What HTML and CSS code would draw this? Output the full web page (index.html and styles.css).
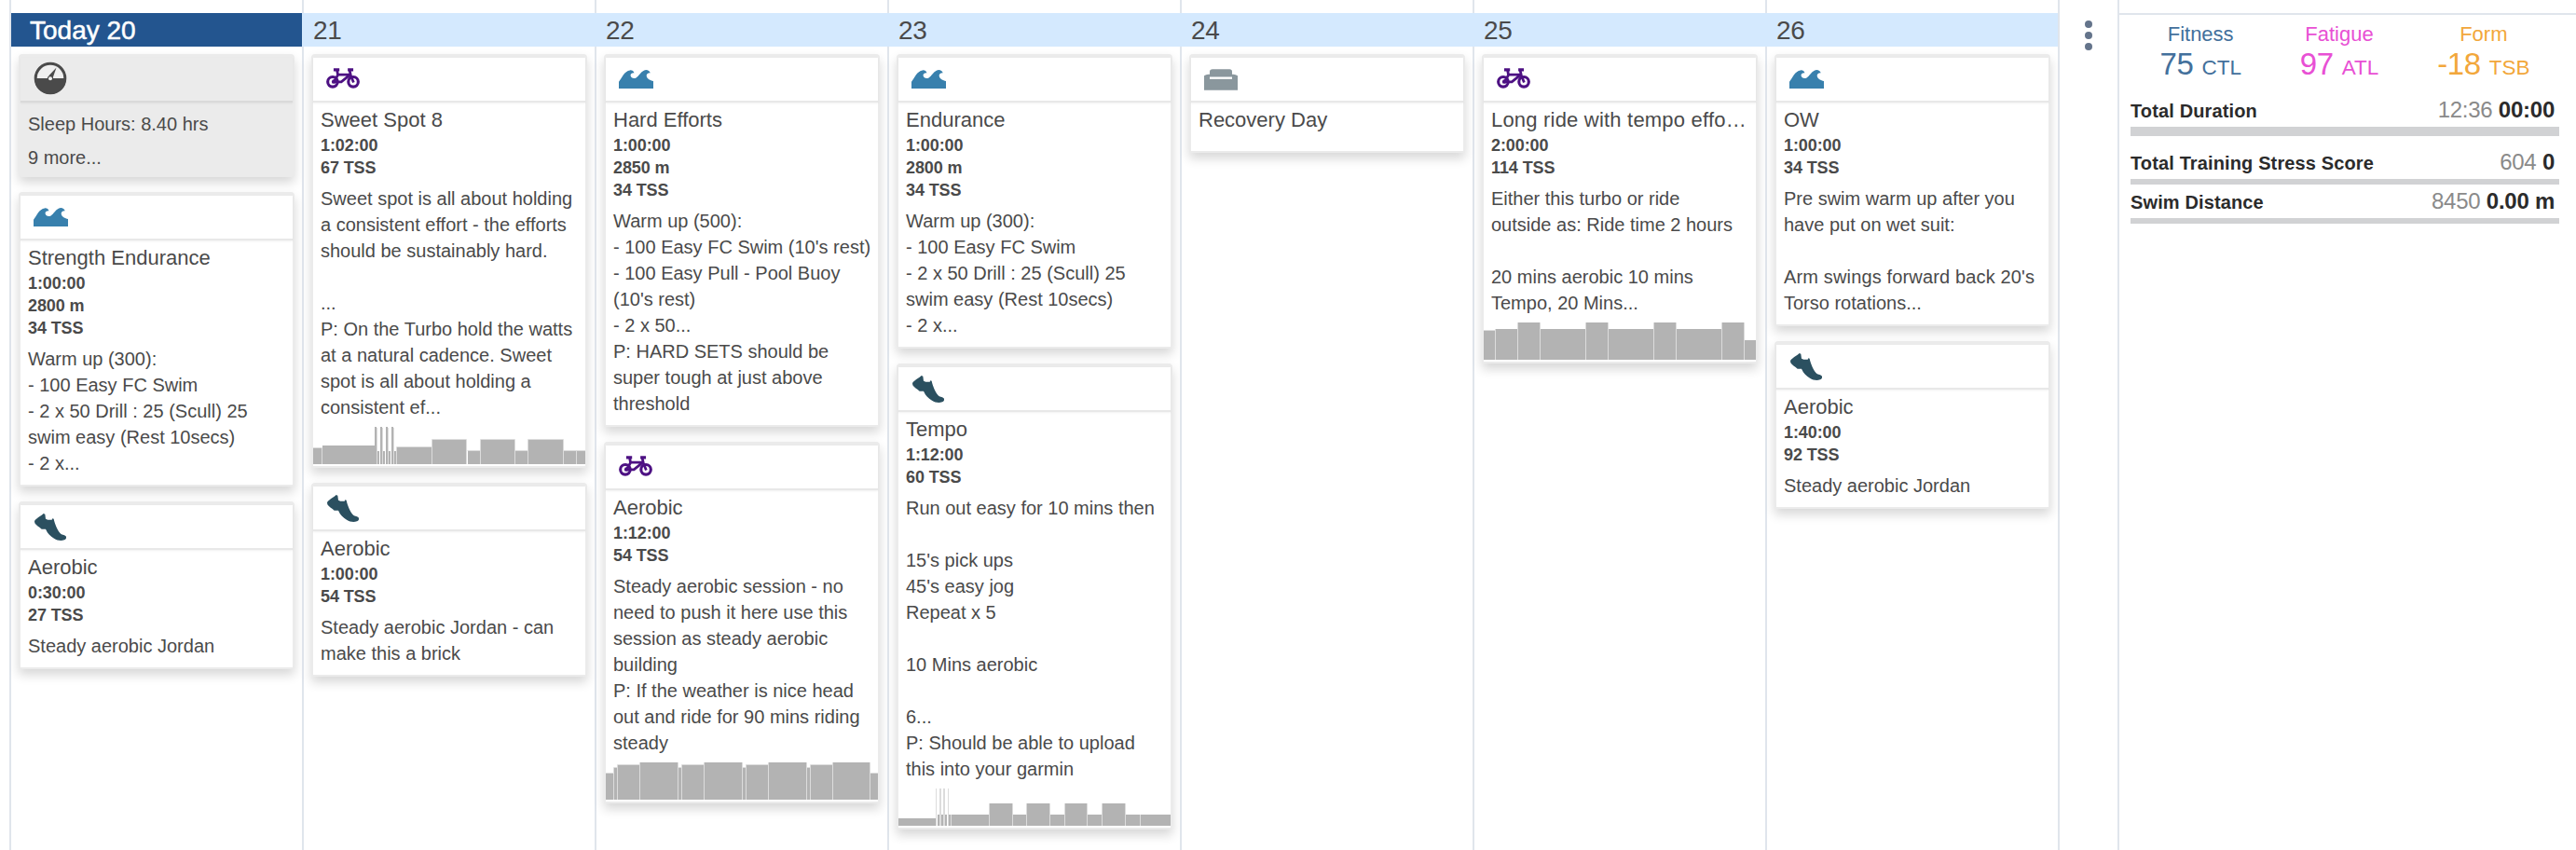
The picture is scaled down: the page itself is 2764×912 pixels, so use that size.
FILE: index.html
```html
<!DOCTYPE html>
<html lang="en">
<head>
<meta charset="utf-8">
<title>Training Calendar</title>
<link rel="stylesheet" href="styles.css">
</head>
<body>
<svg class="sprite" width="0" height="0">
  <symbol id="bike" viewBox="0 0 109 65">
    <g fill="none" stroke="#4d1183" stroke-width="9.5">
      <circle cx="21" cy="44" r="16"/><circle cx="88" cy="44" r="16"/>
      <path d="M24 5H43M70 5H88"/>
      <path d="M35 5L38 22L25 44H49L79 20M36 21H78M76 6L80 24L89 46" stroke-width="8.5"/>
    </g>
    <circle cx="25" cy="43" r="7" fill="#4d1183"/>
  </symbol>
  <symbol id="wave" viewBox="0 0 112 60">
    <path fill="#3880ad" d="M0 60V38C10 26 18 3 36 1C43 0 48 4 50 10C43 9 38 12 38 18C39 26 48 29 55 26C66 21 72 2 88 0C95 0 101 4 102 10C95 9 89 13 90 20C92 29 102 34 112 36V60Z"/>
  </symbol>
  <symbol id="shoe" viewBox="0 0 102 87">
    <path fill="#2b5060" d="M0 25C2 17 22 7 29 0L34 2L36 17Q45 22 56 20L58 16L62 17C65 32 73 52 83 64C87 69 95 68 101 73C104 78 101 83 96 85C84 89 73 86 63 80C51 73 41 63 38 54L36 50L23 50C16 44 4 37 1 31Z"/>
  </symbol>
  <symbol id="sofa" viewBox="0 0 108 68">
    <path fill="#8a979d" d="M18 17V8Q18 0 27 0H82Q90 0 90 8V17Q99 15 108 21V68H0V21Q8 15 18 17Z"/>
    <path fill="#fff" d="M18 25H90V32H18Z"/>
  </symbol>
  <symbol id="gauge" viewBox="0 0 36 36">
    <circle cx="18" cy="18" r="15.8" fill="#efefef" stroke="#4a4a4a" stroke-width="3"/>
    <path d="M1 18H35A17 17 0 0 1 1 18Z" fill="#4a4a4a"/>
    <path d="M24.5 6.5L20.5 18H15.5L17 14.5Z" fill="#4a4a4a"/>
    <circle cx="18" cy="18.3" r="3.1" fill="#4a4a4a"/><circle cx="18" cy="18.3" r="2" fill="#efefef"/>
  </symbol>
</svg>
<div class="app">
  <main class="week">
    <section class="day">
      <h2 class="day-head today">Today 20</h2>
      <article class="card metrics">
        <header class="card-head"><svg class="i-gauge"><use href="#gauge"/></svg></header>
        <p class="metric">Sleep Hours: 8.40 hrs</p>
        <p class="metric">9 more...</p>
      </article>
      <article class="card">
        <header class="card-head"><svg class="i-wave"><use href="#wave"/></svg></header>
        <h3 class="title">Strength Endurance</h3>
        <div class="meta">1:00:00<br>2800 m<br>34 TSS</div>
        <p class="desc">Warm up (300):<br>- 100 Easy FC Swim<br>- 2 x 50 Drill : 25 (Scull) 25<br>swim easy (Rest 10secs)<br>- 2 x...</p>
      </article>
      <article class="card">
        <header class="card-head"><svg class="i-shoe"><use href="#shoe"/></svg></header>
        <h3 class="title">Aerobic</h3>
        <div class="meta">0:30:00<br>27 TSS</div>
        <p class="desc">Steady aerobic Jordan</p>
      </article>
    </section>

    <section class="day">
      <h2 class="day-head">21</h2>
      <article class="card">
        <header class="card-head"><svg class="i-bike"><use href="#bike"/></svg></header>
        <h3 class="title">Sweet Spot 8</h3>
        <div class="meta">1:02:00<br>67 TSS</div>
        <p class="desc has-chart">Sweet spot is all about holding<br>a consistent effort - the efforts<br>should be sustainably hard.<br><br>...<br>P: On the Turbo hold the watts<br>at a natural cadence. Sweet<br>spot is all about holding a<br>consistent ef...</p>
        <svg class="chart" viewBox="0 0 292 40">
          <path class="bars" d="M0 40V23H9V40ZM10 40V20H66V40ZM66 40V0H68V40ZM69 40V26H71V40ZM72 40V0H74V40ZM75 40V26H77V40ZM78 40V0H80V40ZM81 40V26H83V40ZM84 40V0H86V40ZM87 40V26H89V40ZM90 40V22H127V40ZM128 40V14H164V40ZM166 40V26H179V40ZM180 40V14H216V40ZM217 40V26H230V40ZM231 40V14H268V40ZM269 40V26H282V40ZM283 40V26H292V40Z"/>
          <path class="edges" d="M0 22.5H9.5V40M68.500 1V40M74.500 1V40M80.500 1V40M86.500 1V40M89.500 40V21.500H127.500M127.500 40V13.500H164.500V40M165.500 25.500H179.500M179.500 40V13.500H216.500V40M217 25.500H230M230.500 40V13.500H268.500V40M269 25.500H292M282.500 26V40"/>
        </svg>
      </article>
      <article class="card">
        <header class="card-head"><svg class="i-shoe"><use href="#shoe"/></svg></header>
        <h3 class="title">Aerobic</h3>
        <div class="meta">1:00:00<br>54 TSS</div>
        <p class="desc">Steady aerobic Jordan - can<br>make this a brick</p>
      </article>
    </section>

    <section class="day">
      <h2 class="day-head">22</h2>
      <article class="card">
        <header class="card-head"><svg class="i-wave"><use href="#wave"/></svg></header>
        <h3 class="title">Hard Efforts</h3>
        <div class="meta">1:00:00<br>2850 m<br>34 TSS</div>
        <p class="desc">Warm up (500):<br>- 100 Easy FC Swim (10's rest)<br>- 100 Easy Pull - Pool Buoy<br>(10's rest)<br>- 2 x 50...<br>P: HARD SETS should be<br>super tough at just above<br>threshold</p>
      </article>
      <article class="card">
        <header class="card-head"><svg class="i-bike"><use href="#bike"/></svg></header>
        <h3 class="title">Aerobic</h3>
        <div class="meta">1:12:00<br>54 TSS</div>
        <p class="desc has-chart">Steady aerobic session - no<br>need to push it here use this<br>session as steady aerobic<br>building<br>P: If the weather is nice head<br>out and ride for 90 mins riding<br>steady</p>
        <svg class="chart" viewBox="0 0 292 40">
          <path class="bars" d="M0 40V12H8V40ZM9 40V6H12V40ZM13 40V3H36V40ZM37 40V0H77V40ZM78 40V6H81V40ZM82 40V3H105V40ZM106 40V0H146V40ZM147 40V6H150V40ZM151 40V3H174V40ZM175 40V0H215V40ZM216 40V6H219V40ZM220 40V3H243V40ZM244 40V0H283V40ZM284 40V12H292V40Z"/>
          <path class="edges" d="M0 11.500H8.500V5.500H12.500V2.500H36.500M8.500 12V40M12.500 5V40M36.500 0V40M77.500 0V40M78 5.500H81.500V2.500H105.500M81.500 5V40M105.500 0V40M146.500 0V40M147 5.500H150.500V2.500H174.500M150.500 5V40M174.500 0V40M215.500 0V40M216 5.500H219.500V2.500H243.500M219.500 5V40M243.500 0V40M283.500 0V40M284 11.500H292"/>
        </svg>
      </article>
    </section>

    <section class="day">
      <h2 class="day-head">23</h2>
      <article class="card">
        <header class="card-head"><svg class="i-wave"><use href="#wave"/></svg></header>
        <h3 class="title">Endurance</h3>
        <div class="meta">1:00:00<br>2800 m<br>34 TSS</div>
        <p class="desc">Warm up (300):<br>- 100 Easy FC Swim<br>- 2 x 50 Drill : 25 (Scull) 25<br>swim easy (Rest 10secs)<br>- 2 x...</p>
      </article>
      <article class="card">
        <header class="card-head"><svg class="i-shoe"><use href="#shoe"/></svg></header>
        <h3 class="title">Tempo</h3>
        <div class="meta">1:12:00<br>60 TSS</div>
        <p class="desc has-chart">Run out easy for 10 mins then<br><br>15's pick ups<br>45's easy jog<br>Repeat x 5<br><br>10 Mins aerobic<br><br>6...<br>P: Should be able to upload<br>this into your garmin</p>
        <svg class="chart" viewBox="0 0 292 40">
          <path class="bars" d="M0 40V32H40V40ZM42 40V28H44V40ZM46 40V28H48V40ZM50 40V28H52V40ZM54 40V28H56V40ZM57 40V28H97V40ZM98 40V16H122V40ZM123 40V28H137V40ZM138 40V16H162V40ZM163 40V28H178V40ZM179 40V16H202V40ZM203 40V28H218V40ZM219 40V16H243V40ZM244 40V28H259V40ZM260 40V28H292V40Z"/>
          <path class="edges" d="M40.500 0V40M44.500 0V40M45.500 0V40M48.500 0V40M49.500 0V40M53.500 0V40M56.500 28V40M97.500 16V40M122.500 16V40M137.500 16V40M162.500 16V40M178.500 16V40M202.500 16V40M218.500 16V40M243.500 16V40M259.500 28V40"/>
        </svg>
      </article>
    </section>

    <section class="day">
      <h2 class="day-head">24</h2>
      <article class="card">
        <header class="card-head"><svg class="i-sofa"><use href="#sofa"/></svg></header>
        <h3 class="title title-only">Recovery Day</h3>
      </article>
    </section>

    <section class="day">
      <h2 class="day-head">25</h2>
      <article class="card">
        <header class="card-head"><svg class="i-bike"><use href="#bike"/></svg></header>
        <h3 class="title title-long">Long ride with tempo effo…</h3>
        <div class="meta">2:00:00<br>114 TSS</div>
        <p class="desc has-chart">Either this turbo or ride<br>outside as: Ride time 2 hours<br><br>20 mins aerobic 10 mins<br>Tempo, 20 Mins...</p>
        <svg class="chart" viewBox="0 0 292 40">
          <path class="bars" d="M0 40V9H12V40ZM13 40V7H36V40ZM37 40V0H60V40ZM61 40V7H109V40ZM110 40V0H133V40ZM134 40V7H182V40ZM183 40V0H206V40ZM207 40V7H255V40ZM256 40V0H279V40ZM280 40V19H292V40Z"/>
          <path class="edges" d="M0 8.500H12M12.500 7V40M36.500 0V40M60.500 0V40M109.500 0V40M133.500 0V40M182.500 0V40M206.500 0V40M255.500 0V40M279.500 0V40"/>
        </svg>
      </article>
    </section>

    <section class="day">
      <h2 class="day-head">26</h2>
      <article class="card">
        <header class="card-head"><svg class="i-wave"><use href="#wave"/></svg></header>
        <h3 class="title">OW</h3>
        <div class="meta">1:00:00<br>34 TSS</div>
        <p class="desc">Pre swim warm up after you<br>have put on wet suit:<br><br><span class="loose">Arm swings forward back 20's</span><br>Torso rotations...</p>
      </article>
      <article class="card">
        <header class="card-head"><svg class="i-shoe"><use href="#shoe"/></svg></header>
        <h3 class="title">Aerobic</h3>
        <div class="meta">1:40:00<br>92 TSS</div>
        <p class="desc">Steady aerobic Jordan</p>
      </article>
    </section>
  </main>

  <div class="menu"><i class="dot"></i><i class="dot"></i><i class="dot"></i></div>

  <aside class="summary">
    <div class="summary-body">
      <div class="scores">
        <div class="score fitness"><div class="score-name">Fitness</div><div class="score-value">75 <small class="unit">CTL</small></div></div>
        <div class="score fatigue"><div class="score-name">Fatigue</div><div class="score-value">97 <small class="unit">ATL</small></div></div>
        <div class="score form"><div class="score-name">Form</div><div class="score-value">-18 <small class="unit">TSB</small></div></div>
      </div>
      <div class="total total-main"><span class="label">Total Duration</span><span class="amount">12:36 <b class="done">00:00</b></span></div>
      <div class="total"><span class="label">Total Training Stress Score</span><span class="amount">604 <b class="done">0</b></span></div>
      <div class="total"><span class="label">Swim Distance</span><span class="amount">8450 <b class="done">0.00 m</b></span></div>
    </div>
  </aside>
</div>
</body>
</html>
```
FILE: styles.css
```css
* { box-sizing: border-box; }
body { margin: 0; background: #fff; color: #4a4a4a; font-family: "Liberation Sans", Arial, sans-serif; }
h2, h3, p { margin: 0; font-weight: normal; }
.sprite { display: none; }
svg { display: block; }

.app { display: flex; width: 2764px; height: 912px; overflow: hidden; padding-left: 10px; }
.week { display: flex; border-right: 2px solid #e0e5ec; }
.day { width: 314px; padding-top: 14px; border-left: 2px solid #e0e5ec; }
.day-head { height: 36px; margin: 0 0 8px -2px; padding-left: 12px; background: #d4e9fe; font-size: 28px; line-height: 38px; letter-spacing: -0.2px; }
.day-head.today { margin-left: 0; padding-left: 20px; background: #23558f; color: #fff; letter-spacing: 0; -webkit-text-stroke: 0.5px #fff; }

.card { width: 296px; margin: 0 0 16px 8px; border: 2px solid #ebebeb; border-top-width: 4px; border-radius: 4px 4px 0 0; background: #fff; box-shadow: 0 6px 12px rgba(0, 0, 0, 0.16); }
.card-head { height: 48px; border-bottom: 2px solid #e8e8e8; box-shadow: 0 1px 2px rgba(0, 0, 0, 0.06); }
.card-head svg { margin-left: 14px; }
.card-head { display: flex; align-items: flex-start; }
.i-bike { width: 36px; height: 22px; margin-top: 11px; }
.i-wave { width: 37px; height: 20px; margin-top: 13px; }
.card-head .i-shoe { width: 34px; height: 29px; margin: 9px 0 0 15px; }
.i-sofa { width: 36px; height: 23px; margin-top: 12px; }
.i-gauge { width: 36px; height: 36px; margin-top: 4px; }

.title { padding: 5px 8px 0; font-size: 22px; line-height: 28px; white-space: nowrap; }
.title-only { padding-bottom: 19px; }
.title-long { letter-spacing: 0.2px; }
.meta { margin-top: 1px; padding: 0 8px; font-size: 18px; font-weight: bold; line-height: 24px; letter-spacing: -0.1px; }
.desc { margin-top: 7px; padding: 0 8px 9px; font-size: 20px; line-height: 28px; white-space: nowrap; }
.desc.has-chart { padding-bottom: 7px; }
.loose { letter-spacing: 0.15px; }
.chart { width: 292px; height: 40px; margin-bottom: 2px; }
.bars { fill: #b3b3b3; }
.edges { fill: none; stroke: #dcdcdc; stroke-width: 1; }

.metrics { height: 132px; border-radius: 4px; background: #ebebeb; }
.metrics .card-head { margin-bottom: 5px; border-bottom-color: #dadada; }
.metric { padding: 0 8px; font-size: 20px; line-height: 36px; }

.menu { display: flex; flex-direction: column; align-items: center; gap: 4px; width: 62px; padding-top: 22px; }
.dot { width: 8px; height: 8px; border-radius: 50%; background: #64748b; }

.summary { flex: 1; padding-top: 14px; border-left: 2px solid #e0e5ec; }
.summary-body { border-top: 2px solid #e0e5ec; padding: 9px 18px 0 12px; }
.scores { display: flex; justify-content: space-around; height: 80px; }
.score { text-align: center; }
.score-name { font-size: 22px; line-height: 24px; }
.score-value { font-size: 33px; line-height: 40px; letter-spacing: -0.3px; }
.unit { font-size: 22.5px; letter-spacing: 0; }
.fitness { color: #43709c; }
.fatigue { color: #e850d4; }
.form { color: #f2a73b; }
.total { display: flex; justify-content: space-between; align-items: baseline; height: 42px; padding-right: 5px; line-height: 26px; color: #2b2b2b; background: linear-gradient(#d1d2d4, #d1d2d4) 0 31px / 100% 6px no-repeat; }
.total-main { height: 56px; background-size: 100% 10px; }
.label { font-size: 20px; font-weight: bold; letter-spacing: 0.13px; }
.amount { color: #8a8a8a; font-size: 24px; letter-spacing: -0.25px; }
.done { color: #2b2b2b; }
```
